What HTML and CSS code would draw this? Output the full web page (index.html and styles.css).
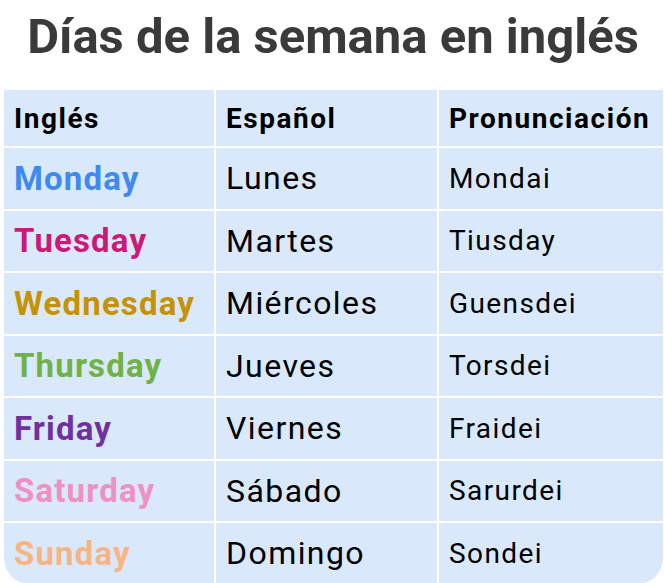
FILE: index.html
```html
<!DOCTYPE html>
<html lang="es">
<head>
<meta charset="utf-8">
<link rel="stylesheet" href="styles.css">
</head>
<body>
<h1 class="title">Días de la semana en inglés</h1>
<div class="table">
  <div class="cell head">Inglés</div>
  <div class="cell head">Español</div>
  <div class="cell head">Pronunciación</div>

  <div class="cell day mon">Monday</div>
  <div class="cell es">Lunes</div>
  <div class="cell pr">Mondai</div>

  <div class="cell day tue">Tuesday</div>
  <div class="cell es">Martes</div>
  <div class="cell pr">Tiusday</div>

  <div class="cell day wed">Wednesday</div>
  <div class="cell es">Miércoles</div>
  <div class="cell pr">Guensdei</div>

  <div class="cell day thu">Thursday</div>
  <div class="cell es">Jueves</div>
  <div class="cell pr">Torsdei</div>

  <div class="cell day fri">Friday</div>
  <div class="cell es">Viernes</div>
  <div class="cell pr">Fraidei</div>

  <div class="cell day sat">Saturday</div>
  <div class="cell es">Sábado</div>
  <div class="cell pr">Sarurdei</div>

  <div class="cell day sun last-l">Sunday</div>
  <div class="cell es">Domingo</div>
  <div class="cell pr last-r">Sondei</div>
</div>
</body>
</html>
```

FILE: styles.css
```css
html, body {
  margin: 0;
  padding: 0;
  background: #ffffff;
  font-family: Roboto, "Liberation Sans", sans-serif;
}
body {
  overflow: hidden;
}
.title {
  margin: 0;
  height: 90px;
  display: flex;
  align-items: center;
  justify-content: center;
  font-size: 49px;
  font-weight: 700;
  color: #3a3a3a;
  padding-bottom: 18px;
  padding-left: 2px;
  box-sizing: border-box;
}
.table {
  margin-left: 4px;
  width: 659px;
  display: grid;
  grid-template-columns: 210px 221px 224px;
  grid-template-rows: 56px repeat(7, 60.5px);
  gap: 2px;
  background: #ffffff;
}
.cell {
  background: #d9e8fb;
  display: flex;
  align-items: center;
  padding-left: 10px;
  color: #000000;
  white-space: nowrap;
}
.head {
  font-size: 28px;
  font-weight: 700;
  letter-spacing: 0.055em;
}
.day {
  font-size: 33px;
  font-weight: 700;
  letter-spacing: 0.035em;
}
.es {
  font-size: 32px;
  letter-spacing: 0.045em;
}
.pr {
  font-size: 28px;
  letter-spacing: 0.05em;
}
.mon { color: #3d8af0; }
.tue { color: #cc1877; }
.wed { color: #c69200; }
.thu { color: #70b244; }
.fri { color: #7030a0; }
.sat { color: #f090c2; }
.sun { color: #f8b483; }
.last-l { border-bottom-left-radius: 26px; }
.last-r { border-bottom-right-radius: 26px; }
```
